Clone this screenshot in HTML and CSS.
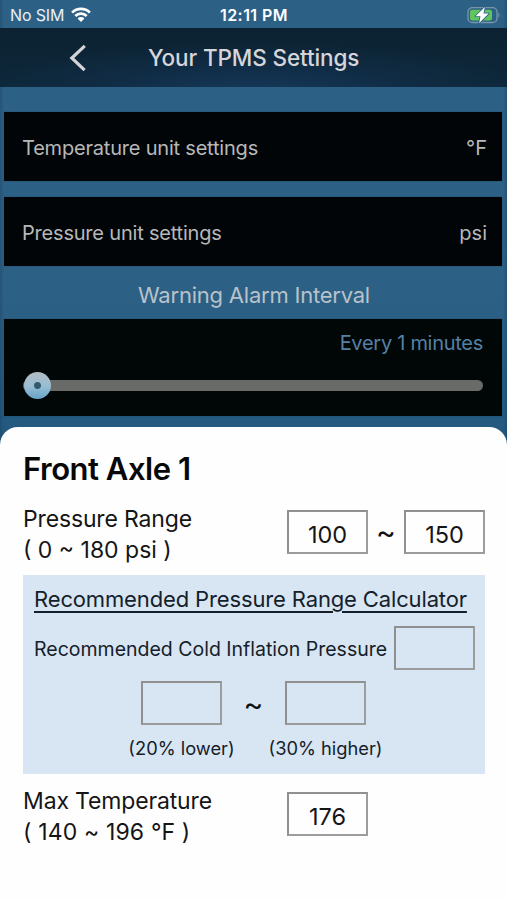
FILE: index.html
```html
<!DOCTYPE html>
<html lang="en">
<head>
<meta charset="utf-8">
<meta name="viewport" content="width=device-width">
<title>Your TPMS Settings</title>
<link rel="stylesheet" href="styles.css">
</head>
<body>
<div class="screen">
  <div class="status">
    <div class="carrier"><span class="sim">No SIM</span>
      <svg class="wifi" width="20" height="16" viewBox="0 0 20 16"><g fill="none" stroke="#fff" stroke-width="2.7"><path d="M1.1 5.6a12.6 12.6 0 0 1 17.8 0"/><path d="M4.3 9a8 8 0 0 1 11.4 0"/></g><path fill="#fff" d="M6.6 11.4a4.8 4.8 0 0 1 6.8 0L10 14.9z"/></svg>
    </div>
    <span class="time">12:11 PM</span>
    <svg class="battery" width="33" height="18" viewBox="0 0 33 18"><rect x="1" y="1.7" width="29" height="14.8" rx="4.3" fill="none" stroke="#7796ad" stroke-width="1.3"/><rect x="3" y="3.8" width="22" height="10.6" rx="2.2" fill="#5fc45d"/><path d="M31.4 6.6c1.5.7 1.5 4.3 0 5z" fill="#7796ad"/><path d="M17.9 1 8.4 10.2h5.1L12.2 17l9.5-9.4h-5.2z" fill="#fff" stroke="#2d6085" stroke-width="1.6" paint-order="stroke" stroke-linejoin="round"/></svg>
  </div>
  <header class="nav">
    <svg class="back" width="20" height="30" viewBox="0 0 20 30"><path d="M17.8 2.8 4.8 15 17.6 27.2" fill="none" stroke="#d3d3d8" stroke-width="3.2"/></svg>
    <h1 class="title">Your TPMS Settings</h1>
  </header>
  <main class="settings">
    <div class="card row"><span class="name">Temperature unit settings</span><span>°F</span></div>
    <div class="card row"><span class="name">Pressure unit settings</span><span>psi</span></div>
    <h2 class="interval-title">Warning Alarm Interval</h2>
    <div class="card interval">
      <span class="every">Every 1 minutes</span>
      <div class="slider"><div class="thumb"></div></div>
    </div>
  </main>
  <section class="sheet">
    <h2 class="axle">Front Axle 1</h2>
    <div class="field">
      <div class="label"><div class="name">Pressure Range</div><div>( 0 ~ 180 psi )</div></div>
      <div class="inputs"><div class="box">100</div><span class="tilde">~</span><div class="box">150</div></div>
    </div>
    <div class="calc">
      <div class="calc-title">Recommended Pressure Range Calculator</div>
      <div class="cold"><span class="cold-label">Recommended Cold Inflation Pressure</span><div class="box"></div></div>
      <div class="range">
        <div class="bound"><div class="box"></div><span>(20% lower)</span></div>
        <span class="tilde">~</span>
        <div class="bound"><div class="box"></div><span>(30% higher)</span></div>
      </div>
    </div>
    <div class="field max">
      <div class="label"><div class="name">Max Temperature</div><div class="limits">( 140 ~ 196 °F )</div></div>
      <div class="inputs"><div class="box">176</div></div>
    </div>
  </section>
</div>
</body>
</html>
```
FILE: styles.css
```css
* { box-sizing: border-box; }
body { margin: 0; font-family: Inter, "Liberation Sans", sans-serif; }
h1, h2 { margin: 0; font-weight: 400; }
svg { display: block; }
.screen { width: 507px; height: 900px; overflow: hidden; display: flex; flex-direction: column; background: linear-gradient(90deg, rgba(20,60,90,.35), transparent 4px, transparent 503px, rgba(20,60,90,.35)), linear-gradient(#2d6085 0, #2d6085 290px, #23597f 440px); white-space: nowrap; }
.status { height: 28px; flex: none; display: grid; grid-template-columns: 1fr auto 1fr; align-items: center; padding: 1px 7px 0 8px; color: #fff; }
.carrier { display: flex; align-items: center; gap: 7px; padding-left: 2px; }
.sim { font-size: 16px; line-height: 26px; letter-spacing: -.15px; color: #e9f0f5; }
.time { font-size: 16px; font-weight: 600; line-height: 28px; letter-spacing: .45px; }
.battery { justify-self: end; }
.nav { height: 59px; flex: none; display: flex; align-items: center; padding-left: 67px; background: radial-gradient(ellipse 55% 85% at 50% 110%, #15395a, #102c45 55%, transparent), linear-gradient(#0c2232, #0d2739); }
.title { margin-left: 61px; font-size: 22.5px; font-weight: 500; line-height: 30px; letter-spacing: -.12px; color: #d6d5da; }
.settings { flex: none; height: 340px; padding: 25px 5px 0 4px; color: #b8b8b8; }
.card { background: #010508; box-shadow: 0 0 1px #174461; }
.row { height: 69px; margin-bottom: 16px; padding: 2px 15px 0 18px; display: flex; justify-content: space-between; align-items: center; font-size: 20px; }
.row .name { letter-spacing: -.2px; }
.interval-title { height: 37px; line-height: 26px; text-align: center; font-size: 22px; letter-spacing: -.22px; padding-left: 2px; color: #b8c2ca; }
.interval { height: 97px; padding: 11px 19px 0 19px; background: #010606; }
.every { display: block; text-align: right; font-size: 20px; line-height: 26px; letter-spacing: -.28px; color: #5481a5; }
.slider { height: 11px; margin-top: 24px; border-radius: 6px; background: #696b69; display: flex; align-items: center; }
.thumb { width: 27px; height: 27px; margin-left: .6px; border-radius: 50%; background: radial-gradient(circle, #2f5a70 3px, transparent 4px), linear-gradient(#b3bcc2, #9bbed3 50%, #66a4cb); }
.sheet { flex: 1; padding: 24px 22px 0 23px; border-radius: 18px 18px 0 0; background: #fefefe; color: #151515; }
.axle { font-size: 31px; font-weight: 600; line-height: 36px; letter-spacing: -.48px; color: #080808; }
.field { display: flex; justify-content: space-between; height: 88px; padding-top: 16px; }
.label { padding-top: 1px; font-size: 23px; line-height: 31px; }
.label .name { letter-spacing: -.15px; }
.label .limits { letter-spacing: .15px; }
.inputs { display: flex; align-items: center; height: 44px; margin-top: 7px; }
.box { width: 81px; height: 44px; border: 2px solid #909090; border-right-color: #9c9c9c; border-bottom-color: #9c9c9c; display: flex; align-items: center; justify-content: center; padding-top: 5px; font-size: 23.5px; }
.tilde { width: 36px; text-align: center; font-size: 30px; font-weight: 400; line-height: 44px; color: #111; }
.calc { height: 199px; padding: 8px 10px 0 11px; background: #d7e6f2; color: #15202a; }
.calc-title { font-size: 22px; line-height: 32px; letter-spacing: -.14px; text-decoration: underline; text-decoration-thickness: 1.5px; text-underline-offset: 4px; }
.cold { height: 44px; margin-top: 11px; display: flex; align-items: center; justify-content: space-between; }
.cold-label { padding-top: 1px; font-size: 19.5px; }
.range { display: grid; grid-template-columns: 81px 63px 81px; justify-content: center; margin: 11px 2px 0 0; }
.range .tilde { width: auto; line-height: 47px; }
.bound { display: flex; flex-direction: column; align-items: center; font-size: 18.3px; line-height: 24px; }
.bound span { margin-top: 11px; }
.max { padding-top: 11px; }
.max .inputs { margin-right: 117px; margin-top: 7px; }
```
